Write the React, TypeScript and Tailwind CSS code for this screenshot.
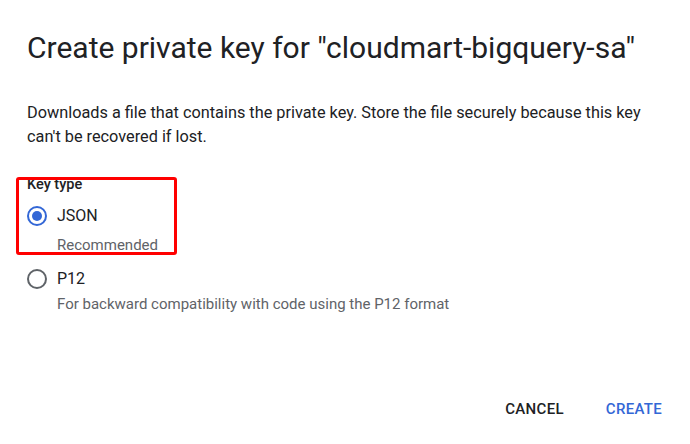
export default function App() {
  return (
    <div className="w-[690px] h-[444px] bg-white text-[#202124] font-['Roboto',sans-serif] flex flex-col">
      <div className="px-[27px] pt-[30px]">
        <h1 className="text-[30px] leading-[36px] font-normal">Create private key for "cloudmart-bigquery-sa"</h1>
        <p className="mt-[35px] text-[16.3px] leading-[24px] text-[#202124]">
          Downloads a file that contains the private key. Store the file securely because this key can't be recovered if lost.
        </p>
      </div>

      <div className="relative mt-[30px] px-[27px]">
        <div className="absolute left-[16px] top-[-2px] w-[161px] h-[78px] border-[3px] border-[#ff0000] rounded-[3px]" />
        <div className="text-[14.5px] leading-[20px] font-medium -mt-[4px]">Key type</div>

        <label className="flex items-center gap-[10px] mt-[11px]">
          <span className="w-[20px] h-[20px] rounded-full border-2 border-[#3367d6] flex items-center justify-center">
            <span className="w-[10px] h-[10px] rounded-full bg-[#3367d6]" />
          </span>
          <span className="text-[16px] leading-[20px]">JSON</span>
        </label>
        <div className="ml-[30px] mt-[9px] text-[15px] leading-[20px] text-[#5f6368]">Recommended</div>

        <label className="flex items-center gap-[10px] mt-[14px]">
          <span className="w-[20px] h-[20px] rounded-full border-2 border-[#5f6368]" />
          <span className="text-[16px] leading-[20px]">P12</span>
        </label>
        <div className="ml-[30px] mt-[5px] text-[15px] leading-[20px] text-[#5f6368]">For backward compatibility with code using the P12 format</div>
      </div>

      <div className="mt-auto mb-[17px] flex justify-end gap-[26px] pr-[20px]">
        <button className="px-[8px] h-[36px] text-[15px] font-medium tracking-[0.02em] text-[#202124]">CANCEL</button>
        <button className="px-[8px] h-[36px] text-[15px] font-medium tracking-[0.02em] text-[#3367d6]">CREATE</button>
      </div>
    </div>
  );
}
